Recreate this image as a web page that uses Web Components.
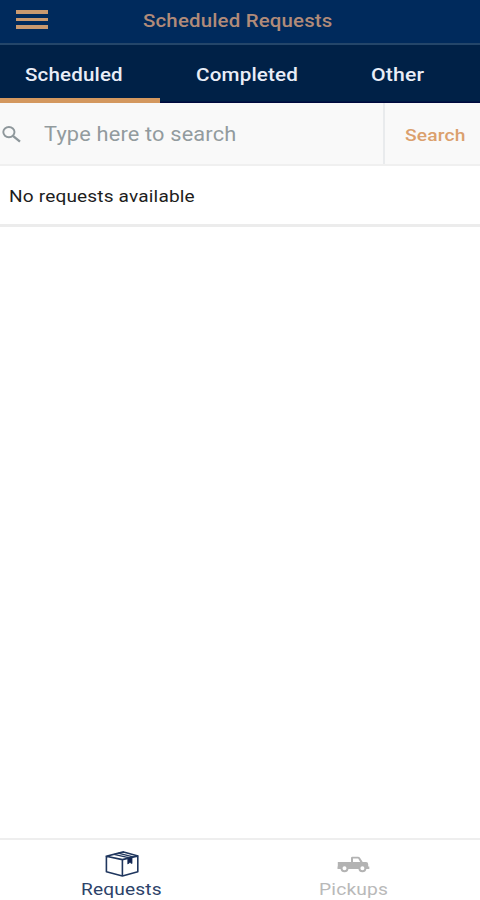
<!DOCTYPE html>
<html lang="en">
<head>
<meta charset="utf-8">
<meta name="viewport" content="width=device-width, initial-scale=1">
<title>Scheduled Requests</title>
<style>
  html, body {
    height: 100%;
    margin: 0;
  }

  body {
    background: #fff;
    font-family: Roboto, "Liberation Sans", sans-serif;
    overflow: hidden;
  }
</style>
</head>
<body>
<request-app></request-app>

<script>
const define = (name, html, setup) => {
  const template = document.createElement('template');
  template.innerHTML = html;

  customElements.define(name, class extends HTMLElement {
    constructor() {
      super();
      this.attachShadow({ mode: 'open' });
      this.shadowRoot.appendChild(template.content.cloneNode(true));
    }

    connectedCallback() {
      if (setup) setup(this);
    }
  });
};

// Wide label: stretches its text to the width attribute
define('wide-label', `
  <style>
    :host {
      display: block;
      flex: none;
      letter-spacing: .15px;
      line-height: 20px;
      white-space: nowrap;
    }

    span {
      display: inline-block;
      transform-origin: 0 50%;
    }
  </style>
  <span><slot></slot></span>
`, el => {
  const span = el.shadowRoot.querySelector('span');
  const width = Number(el.getAttribute('width'));
  el.style.width = `${width}px`;
  span.style.transform = `scaleX(${width / span.offsetWidth})`;
});

define('menu-button', `
  <style>
    :host {
      display: flex;
      flex-direction: column;
      gap: 4px;
      width: 32px;
    }

    i {
      background: #c9996f;
      height: 3.5px;
    }
  </style>
  <i></i><i></i><i></i>
`);

define('app-header', `
  <style>
    :host {
      align-items: flex-start;
      background: #002a5c;
      border-bottom: 2px solid #24466a;
      box-sizing: border-box;
      color: #b18b79;
      display: flex;
      font-size: 17.5px;
      font-weight: 500;
      height: 45px;
      padding: 10px 0 0 16px;
    }

    ::slotted(wide-label) {
      margin: 1px 0 0 95px;
    }
  </style>
  <menu-button></menu-button>
  <slot></slot>
`);

define('app-tab', `
  <style>
    :host {
      border-bottom: 5px solid transparent;
      box-sizing: border-box;
      display: flex;
      padding: 20px 0 0 var(--inset);
    }

    :host(.is-active) {
      border-bottom-color: #d4985f;
    }
  </style>
  <slot></slot>
`);

define('app-tabs', `
  <style>
    :host {
      background: linear-gradient(#002147 0 56px, #00093e 57px);
      color: #e9edf7;
      display: grid;
      font-size: 18px;
      font-weight: 500;
      grid-template-columns: repeat(3, 1fr);
      height: 58px;
    }
  </style>
  <slot></slot>
`);

define('search-bar', `
  <style>
    :host {
      background: #f9f9f9;
      border-bottom: 2px solid #f0f0f0;
      box-sizing: border-box;
      display: flex;
      height: 63px;
    }

    .field {
      border-right: 2px solid #e9ebed;
      box-sizing: border-box;
      color: #929b9e;
      display: flex;
      font-size: 19.5px;
      padding: 22px 0 0 2px;
      width: 385px;
    }

    .field wide-label {
      margin-left: 22px;
    }

    svg {
      height: 20px;
      width: 20px;
    }

    .action {
      color: #dba06d;
      display: flex;
      font-size: 17px;
      font-weight: 500;
      padding: 22px 0 0 20px;
    }
  </style>
  <div class="field">
    <svg viewBox="0 0 20 20" fill="none" stroke="#8e979b">
      <ellipse cx="6.9" cy="7.1" rx="5.6" ry="5.1" stroke-width="1.9"/>
      <path d="M11.2 11.1 18 16.7" stroke-width="2.3"/>
    </svg>
    <wide-label width="192">Type here to search</wide-label>
  </div>
  <div class="action"><wide-label width="61">Search</wide-label></div>
`);

define('request-list', `
  <style>
    :host {
      display: block;
      flex: 1;
    }

    .row {
      border-bottom: 3px solid #ececec;
      color: #1d1d1d;
      display: flex;
      font-size: 17px;
      height: 38px;
      padding: 20px 0 0 9px;
    }
  </style>
  <div class="row"><slot></slot></div>
`);

define('box-icon', `
  <style>
    :host, svg { display: block; }
  </style>
  <svg width="34" height="26" viewBox="0 0 34 26" fill="none" stroke="#1f365e" stroke-width="1.6" stroke-linejoin="round">
    <path d="M1.2 5.2 17.4 8.6 33 4.9 18.6.9zM1.4 5.4V20.7L17.4 25 32.8 20.8V5.1M17.4 8.6V25"/>
    <path d="M9 3.3 24.6 6.8M13.2 2.2 28 5.9" stroke-width="1.3"/>
    <path d="M22.8 7.3 27 6.3V12.6L24.9 11.4 22.8 13z" fill="#10214f" stroke-width=".8"/>
  </svg>
`);

define('truck-icon', `
  <style>
    :host, svg { display: block; }
  </style>
  <svg width="33" height="17" viewBox="0 0 33 17">
    <path fill="#b3b3b3" fill-rule="evenodd" d="M.8 6H14V2Q14 .7 15.4.7H21Q22.3.7 23 1.8L25.7 6H29Q31.2 6 31.2 8.2V10.5H32.3V13H.5V10.5H.8zM16 2.6V6H23.2L21.2 2.6z"/>
    <g fill="#fff" stroke="#b3b3b3" stroke-width="2">
      <circle cx="7.5" cy="12.3" r="3"/>
      <circle cx="25.4" cy="12.3" r="3"/>
    </g>
  </svg>
`);

define('nav-item', `
  <style>
    :host {
      align-items: center;
      color: #b9b9b9;
      display: flex;
      flex-direction: column;
    }

    :host(.is-active) {
      color: #2c4269;
    }

    .icon {
      align-items: center;
      display: flex;
      height: 28px;
      padding-bottom: 1px;
    }
  </style>
  <div class="icon"><slot name="icon"></slot></div>
  <slot></slot>
`);

define('bottom-nav', `
  <style>
    :host {
      border-top: 2px solid #eee;
      box-sizing: border-box;
      display: grid;
      font-size: 17px;
      grid-template-columns: 243px 221px;
      height: 62px;
      padding-top: 10px;
    }
  </style>
  <slot></slot>
`);

define('request-app', `
  <style>
    :host {
      display: flex;
      flex-direction: column;
      height: 900px;
      width: 480px;
    }
  </style>
  <app-header><wide-label width="189">Scheduled Requests</wide-label></app-header>
  <app-tabs>
    <app-tab class="is-active" style="--inset: 25px"><wide-label width="98">Scheduled</wide-label></app-tab>
    <app-tab style="--inset: 36px"><wide-label width="102">Completed</wide-label></app-tab>
    <app-tab style="--inset: 51px"><wide-label width="53">Other</wide-label></app-tab>
  </app-tabs>
  <search-bar></search-bar>
  <request-list><wide-label width="186">No requests available</wide-label></request-list>
  <bottom-nav>
    <nav-item class="is-active">
      <box-icon slot="icon"></box-icon>
      <wide-label width="81">Requests</wide-label>
    </nav-item>
    <nav-item>
      <truck-icon slot="icon"></truck-icon>
      <wide-label width="69">Pickups</wide-label>
    </nav-item>
  </bottom-nav>
`);
</script>
</body>
</html>
